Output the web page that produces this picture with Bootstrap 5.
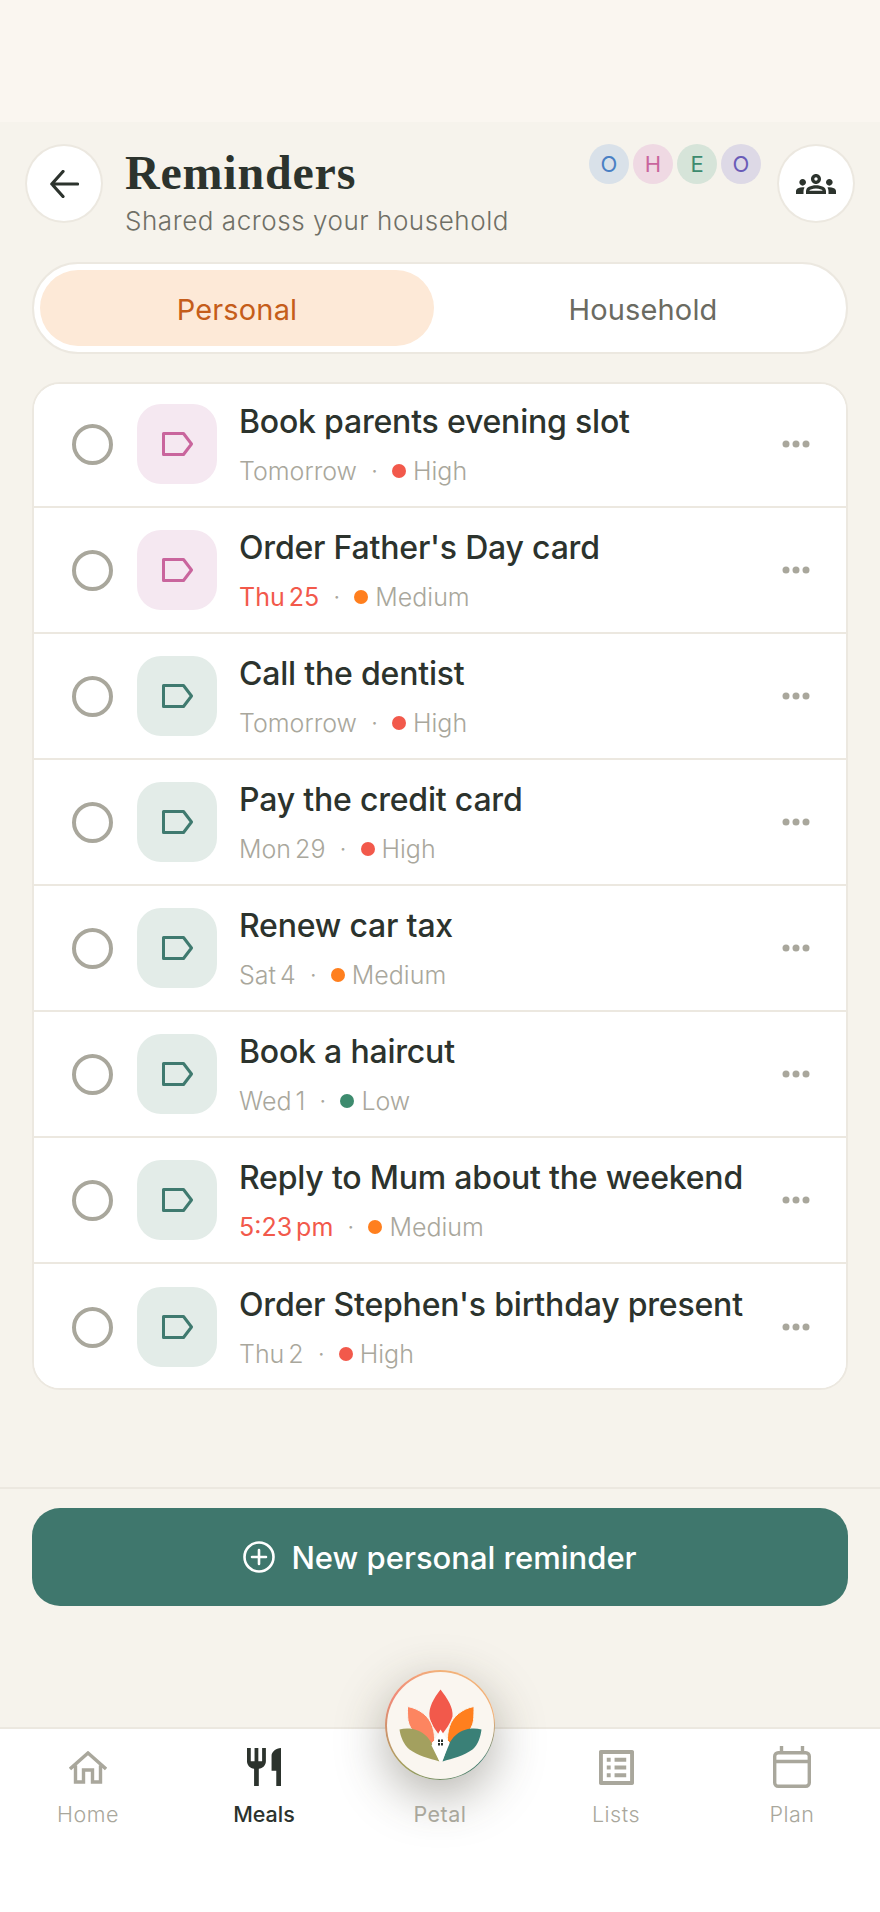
<!DOCTYPE html>
<html lang="en">
<head>
  <meta charset="UTF-8">
  <title>Reminders</title>
  <link href="https://cdn.jsdelivr.net/npm/bootstrap@5.3.3/dist/css/bootstrap.min.css" rel="stylesheet">
  <style>
    body { background: #f6f3ec; font-family: "Inter", "Noto Sans", sans-serif; color: #2c332d; width: 880px; height: 1912px; overflow: hidden; }
    .top-band { height: 122px; background: #faf6f0; }
    .page-head { padding: 22px 25px 0; height: 140px; }
    .round-btn { width: 78px; height: 79px; border-radius: 50%; background: #fff; border: 2px solid #ece8e0; padding: 0; flex-shrink: 0; }
    .head-title { font-family: "Liberation Serif", serif; font-weight: 700; font-size: 48px; line-height: 58px; margin: 0; color: #2c332d; letter-spacing: .8px; }
    .head-sub { font-size: 26px; line-height: 34px; margin-top: 2px; color: #6f6f66; font-weight: 300; letter-spacing: .55px; }
    .avatar-dot { width: 40px; height: 40px; border-radius: 50%; font-size: 22px; font-weight: 400; }
    .tab-wrap { margin: 0 32px; height: 92px; padding: 6px; background: #fff; border: 2px solid #ece8e0; border-radius: 46px; }
    .tab-item { border-radius: 38px; font-size: 29px; font-weight: 400; color: #6b6b62; letter-spacing: .15px; padding-top: 3px; }
    .tab-item.on { background: #fde9d7; color: #c55d1a; width: 394px; flex-shrink: 0; }
    .tab-item.off { flex-grow: 1; padding-left: 12px; }
    .rem-card { margin: 28px 32px 0; border: 2px solid #ece8e0; border-radius: 28px; background: #fff; overflow: hidden; }
    .rem-row { height: 126px; padding: 0 24px 0 38px; border-bottom: 2px solid #ece8e0; background: #fff; }
    .rem-row:first-child { height: 124px; padding-bottom: 2px; }
    .rem-row:last-child { border-bottom: 0; height: 124px; padding-top: 2px; }
    .rem-check { width: 41px; height: 41px; border-radius: 50%; border: 4px solid #a9a79c; flex-shrink: 0; }
    .rem-tile { width: 80px; height: 80px; border-radius: 24px; margin-left: 24px; margin-right: 22px; flex-shrink: 0; }
    .tile-pink { background: #f5e8f1; color: #c9659d; }
    .tile-green { background: #e3ece8; color: #3f7a6f; }
    .rem-title { font-size: 32px; line-height: 40px; font-weight: 500; white-space: nowrap; letter-spacing: -.2px; }
    .rem-meta { font-size: 25px; line-height: 32px; color: #a9a79c; font-weight: 300; margin-top: 13px; white-space: nowrap; }
    .rem-when { word-spacing: -3px; }
    .rem-when.late { color: #f2594b; font-weight: 400; }
    .rem-sep { margin: 0 14px; }
    .rem-dot { display: inline-block; width: 14px; height: 14px; border-radius: 50%; margin-right: 7px; vertical-align: 2px; }
    .dot-high { background: #f2594b; }
    .dot-med { background: #ff7f1e; }
    .dot-low { background: #3d8b6e; }
    .rem-more { width: 28px; margin-left: auto; flex-shrink: 0; margin-right: 12px; }
    .foot-bar { margin-top: 97px; border-top: 2px solid #ece8e0; padding: 19px 32px 0; height: 240px; }
    .new-btn { height: 98px; width: 100%; background: #3f776d; color: #fff; border: 0; border-radius: 28px; font-size: 31px; font-weight: 500; }
    .new-btn:hover { background: #3f776d; color: #fff; }
    .new-btn-text { padding-top: 3px; }
    .tab-bar { position: relative; height: 185px; background: #fff; border-top: 2px solid #ece8e0; padding-top: 15px; }
    .tab-cell { width: 176px; height: 90px; font-size: 21.5px; color: #a9a79c; font-weight: 300; letter-spacing: .5px; }
    .tab-cell.on { color: #2c332d; font-weight: 500; letter-spacing: 0; }
    .tab-ic { height: 46px; }
    .logo-ring { position: absolute; left: 385px; top: -59px; width: 110px; height: 110px; border-radius: 50%; padding: 1.5px; background: conic-gradient(#f2b27a, #f2b27a 80deg, #3f7a6f 130deg, #a3a05f 220deg, #f08a78 300deg, #f2b27a); box-shadow: 0 16px 50px rgba(60,55,40,.38); }
    .logo-in { width: 107px; height: 107px; border-radius: 50%; background: #faf6f0; }
    .petal-label { position: relative; color: #a9a79c; font-weight: 400; }
  </style>
</head>
<body>

<div class="top-band"></div>

<div class="page-head d-flex align-items-start">
  <button class="round-btn d-flex align-items-center justify-content-center" aria-label="Back">
    <svg width="29" height="28" viewBox="0 0 29 28" fill="none" stroke="#2c332d" stroke-width="3.2" stroke-linecap="round" stroke-linejoin="round"><path d="M13 1.5 1.8 14 13 26.5M2 14h25.5"/></svg>
  </button>
  <div class="flex-grow-1" style="margin-left:22px">
    <h1 class="head-title">Reminders</h1>
    <div class="head-sub">Shared across your household</div>
  </div>
  <div class="d-flex gap-1 me-3">
    <span class="avatar-dot d-flex align-items-center justify-content-center" style="background:#d9e1e9;color:#4a80c4">O</span>
    <span class="avatar-dot d-flex align-items-center justify-content-center" style="background:#efd9e3;color:#c9659d">H</span>
    <span class="avatar-dot d-flex align-items-center justify-content-center" style="background:#d6e4d9;color:#3d8b6e">E</span>
    <span class="avatar-dot d-flex align-items-center justify-content-center" style="background:#ddd9e6;color:#6a5cb8">O</span>
  </div>
  <button class="round-btn d-flex align-items-center justify-content-center" aria-label="Household">
    <svg width="40" height="20" viewBox="0 6 24 12" fill="#2c332d"><path d="M4,13c1.1,0,2-0.9,2-2c0-1.1-0.9-2-2-2s-2,0.9-2,2C2,12.1,2.9,13,4,13z M5.13,14.1C4.76,14.04,4.39,14,4,14 c-0.99,0-1.93,0.21-2.78,0.58C0.48,14.9,0,15.62,0,16.43V18l4.5,0v-1.61C4.5,15.56,4.73,14.78,5.13,14.1z M20,13c1.1,0,2-0.9,2-2 c0-1.1-0.9-2-2-2s-2,0.9-2,2C18,12.1,18.9,13,20,13z M24,16.43c0-0.81-0.48-1.53-1.22-1.85C21.93,14.21,20.99,14,20,14 c-0.39,0-0.76,0.04-1.13,0.1c0.4,0.68,0.63,1.46,0.63,2.29V18l4.5,0V16.43z M16.24,13.65C15.07,13.13,13.63,12.75,12,12.75 c-1.63,0-3.07,0.39-4.24,0.9C6.68,14.13,6,15.21,6,16.39V18h12v-1.61C18,15.21,17.32,14.13,16.24,13.65z M8.07,16 c0.09-0.23,0.13-0.39,0.91-0.69c0.97-0.38,1.99-0.56,3.02-0.56s2.05,0.18,3.02,0.56c0.77,0.3,0.81,0.46,0.91,0.69H8.07z M12,8 c0.55,0,1,0.45,1,1s-0.45,1-1,1s-1-0.45-1-1S11.45,8,12,8 M12,6c-1.66,0-3,1.34-3,3c0,1.66,1.34,3,3,3s3-1.34,3-3 C15,7.34,13.66,6,12,6L12,6z"/></svg>
  </button>
</div>

<div class="tab-wrap d-flex">
  <div class="tab-item on d-flex align-items-center justify-content-center">Personal</div>
  <div class="tab-item off d-flex align-items-center justify-content-center">Household</div>
</div>

<div class="rem-card" id="reminder-list"></div>

<div class="foot-bar">
  <button class="btn new-btn d-flex align-items-center justify-content-center">
    <svg width="32" height="32" viewBox="0 0 32 32" fill="none" stroke="#fff" stroke-width="2.6" stroke-linecap="round" class="me-3"><circle cx="16" cy="16" r="14.5"/><path d="M16 9v14M9 16h14"/></svg>
    <span class="new-btn-text">New personal reminder</span>
  </button>
</div>

<div class="tab-bar d-flex">
  <div class="logo-ring">
    <div class="logo-in">
      <svg width="107" height="107" viewBox="1.500 1.500 107 107">
        <path fill="#f2594b" d="M55 19C48 28 43 37 44 46c1 7 6 13 10 19l1 1 1-1c4-6 9-12 11-19 1-9-5-18-12-27z"/>
        <path fill="#fd8560" stroke="#faf6f0" stroke-width="1" d="M22 36C34 38 44 46 47 56c2 6 2 10 2 14l-3 3C34 68 24 60 22.500 50 22 46 22 41 22 36z"/>
        <path fill="#ff7f1e" stroke="#faf6f0" stroke-width="1" d="M88.500 36C77 38 67 46 64 56c-2 6-2 10-2 14l3 3c12-5 22-13 23-23 .5-4 .5-9 .5-14z"/>
        <path fill="#a3a05f" d="M14 59c8-2 18-1 25 5 4 3 7 8 9 12l6 15C44 88 32 85 24 79 18 74 15 66 14 59z"/>
        <path fill="#3a8077" d="M96 59c-8-2-18-1-25 5-4 3-7 8-9 12l-5 15c10-3 22-6 30-12 6-5 8-13 9-20z"/>
        <path fill="#fff" d="M55 59l9 14-7 17-3 1-8-16z"/>
        <path fill="#2c332d" d="M52.500 69h2v2.500h-2zM55.500 69h2v2.500h-2zM52.500 72.500h2V75h-2zM55.500 72.500h2V75h-2z"/>
      </svg>
    </div>
  </div>
  <div class="tab-cell d-flex flex-column align-items-center">
    <div class="tab-ic d-flex align-items-center">
      <svg width="38" height="33" viewBox="0 0 38 33" fill="none" stroke="#a9a79c" stroke-width="3.4"><path d="M1 18 19 2l18 16M6.500 14.500V31h8V19h9v12h8V14.500"/></svg>
    </div>
    <div class="mt-2">Home</div>
  </div>
  <div class="tab-cell on d-flex flex-column align-items-center">
    <div class="tab-ic d-flex align-items-center">
      <svg width="34" height="38" viewBox="3 2 18 20" fill="#2c332d"><path d="M11 9H9V2H7v7H5V2H3v7c0 2.120 1.660 3.840 3.750 3.970V22h2.500v-9.030C11.340 12.840 13 11.120 13 9V2h-2v7zm5-3v8h2.500v8H21V2c-2.760 0-5 2.240-5 4z"/></svg>
    </div>
    <div class="mt-2">Meals</div>
  </div>
  <div class="tab-cell d-flex flex-column align-items-center">
    <div class="tab-ic"></div>
    <div class="mt-2 petal-label">Petal</div>
  </div>
  <div class="tab-cell d-flex flex-column align-items-center">
    <div class="tab-ic d-flex align-items-center">
      <svg width="35" height="35" viewBox="3 3 18 18" fill="#a9a79c"><path d="M19 5v14H5V5h14m1.100-2H3.900c-.5 0-.9.4-.9.9v16.200c0 .4.4.9.9.9h16.200c.4 0 .9-.5.9-.9V3.900c0-.5-.5-.9-.9-.9zM11 7h6v2h-6V7zm0 4h6v2h-6v-2zm0 4h6v2h-6zM7 7h2v2H7zm0 4h2v2H7zm0 4h2v2H7z"/></svg>
    </div>
    <div class="mt-2">Lists</div>
  </div>
  <div class="tab-cell d-flex flex-column align-items-center">
    <div class="tab-ic d-flex align-items-center">
      <svg width="38" height="42" viewBox="0 0 38 42" fill="none" stroke="#a9a79c" stroke-width="3.4"><rect x="1.700" y="6.700" width="34.600" height="33.600" rx="3.500"/><path d="M2 15.500h34M8.500 0v6M29.500 0v6"/></svg>
    </div>
    <div class="mt-2">Plan</div>
  </div>
</div>

<script>
  const reminders = [
    { title: "Book parents evening slot", when: "Tomorrow", level: "High", tile: "pink" },
    { title: "Order Father's Day card", when: "Thu 25", late: true, level: "Medium", tile: "pink" },
    { title: "Call the dentist", when: "Tomorrow", level: "High", tile: "green" },
    { title: "Pay the credit card", when: "Mon 29", level: "High", tile: "green" },
    { title: "Renew car tax", when: "Sat 4", level: "Medium", tile: "green" },
    { title: "Book a haircut", when: "Wed 1", level: "Low", tile: "green" },
    { title: "Reply to Mum about the weekend", when: "5:23 pm", late: true, level: "Medium", tile: "green" },
    { title: "Order Stephen's birthday present", when: "Thu 2", level: "High", tile: "green" }
  ];
  const dotClass = { High: "dot-high", Medium: "dot-med", Low: "dot-low" };
  const tagIcon = `<svg width="31" height="24" viewBox="0 0 31 24" fill="none" stroke="currentColor" stroke-width="3" stroke-linejoin="round"><path d="M1.500 1.500h20L29.500 12l-8 10.500h-20z"/></svg>`;
  const moreIcon = `<svg width="28" height="8" viewBox="0 0 28 8" fill="#a9a79c"><circle cx="4" cy="4" r="3.500"/><circle cx="14" cy="4" r="3.500"/><circle cx="24" cy="4" r="3.500"/></svg>`;

  document.getElementById("reminder-list").innerHTML = reminders.map(r => `
    <div class="rem-row d-flex align-items-center">
      <span class="rem-check"></span>
      <span class="rem-tile tile-${r.tile} d-flex align-items-center justify-content-center">${tagIcon}</span>
      <div>
        <div class="rem-title">${r.title}</div>
        <div class="rem-meta"><span class="rem-when ${r.late ? "late" : ""}">${r.when}</span><span class="rem-sep">·</span><span class="rem-dot ${dotClass[r.level]}"></span>${r.level}</div>
      </div>
      <span class="rem-more d-flex">${moreIcon}</span>
    </div>`).join("");
</script>
<script src="https://cdn.jsdelivr.net/npm/bootstrap@5.3.3/dist/js/bootstrap.bundle.min.js"></script>
</body>
</html>
